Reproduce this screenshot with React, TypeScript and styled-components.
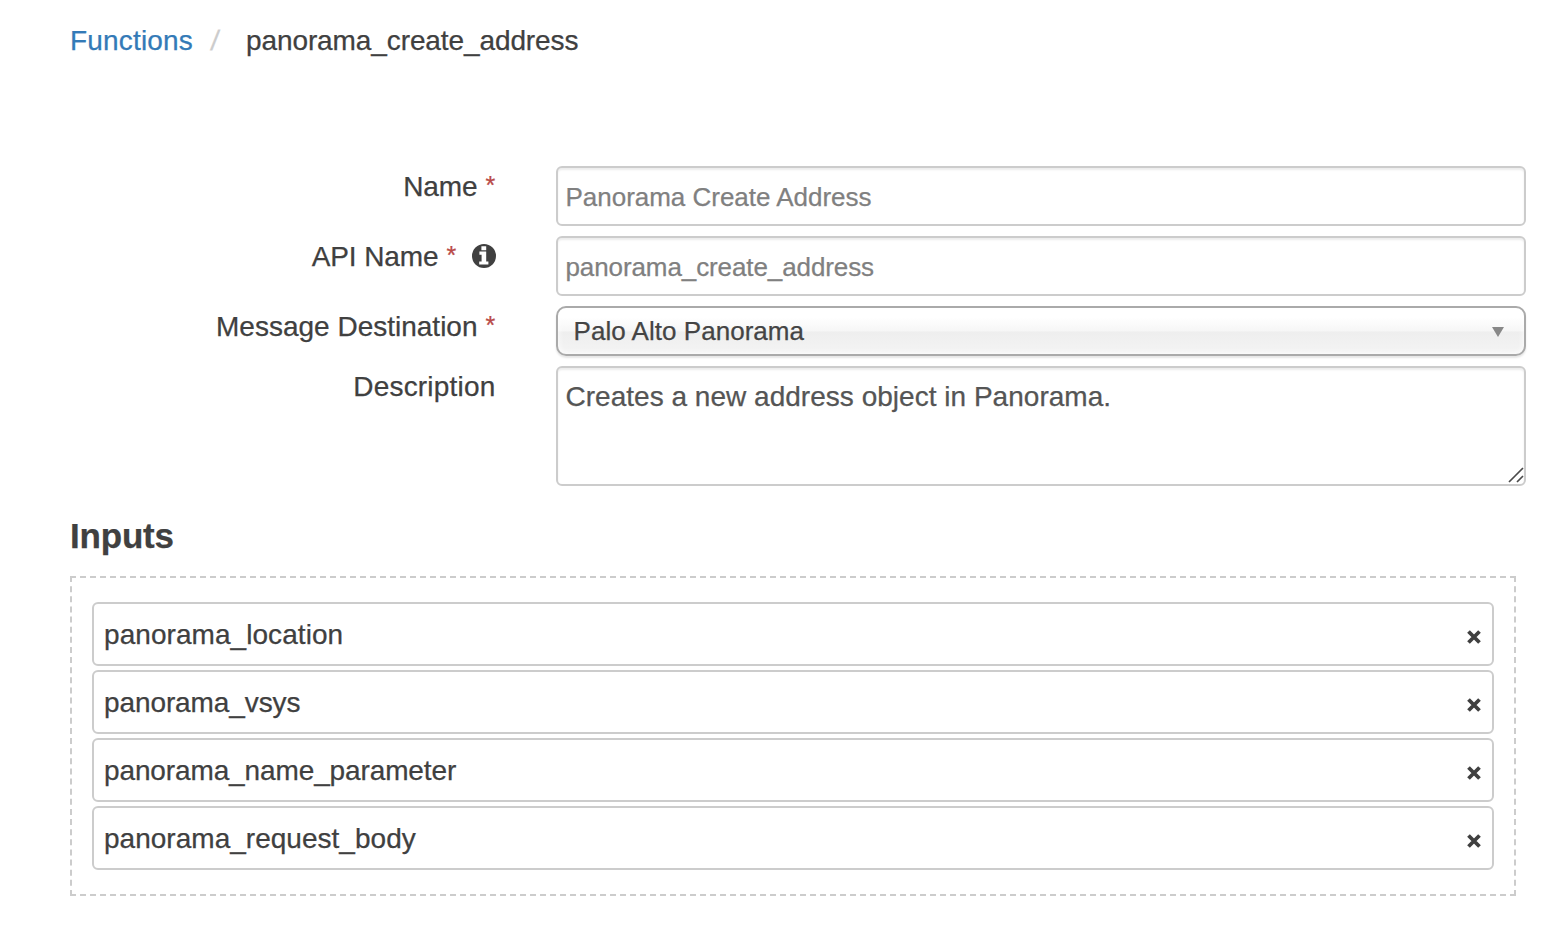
import React from 'react';
import styled, { createGlobalStyle } from 'styled-components';

const GlobalStyle = createGlobalStyle`
  *, *::before, *::after { box-sizing: border-box; }
  body {
    margin: 0;
    background: #fff;
    color: #404040;
    font: 28px/40px "Liberation Sans", Arial, sans-serif;
    -webkit-text-stroke: 0.25px currentColor;
  }
`;

const Page = styled.main`
  width: 1566px;
  height: 934px;
  padding: 21px 40px 0 70px;
  overflow: hidden;
`;

const Breadcrumb = styled.nav`
  display: flex;
  height: 40px;
  margin-bottom: 105px;
  white-space: pre;
`;

const Crumb = styled.a`
  width: 122px;
  color: #337ab7;
  text-decoration: none;
`;

const Slash = styled.span`
  width: 18px;
  margin: 0 18px;
  padding-left: 1px;
  color: #ccc;
  transform: skewX(-7deg);
`;

const Text = styled.span<{ $track?: number }>`
  letter-spacing: ${p => p.$track ?? 0}px;
  white-space: nowrap;
`;

const Form = styled.form`
  display: flex;
  flex-direction: column;
  gap: 10px;
`;

const Row = styled.div`
  display: grid;
  grid-template-columns: 425.5px 970px;
  column-gap: 60.5px;
  align-items: start;
`;

const Label = styled.label`
  display: flex;
  justify-content: flex-end;
  height: 41px;
  margin-bottom: -1px;
  padding-top: 1px;
`;

const Star = styled.span`
  width: 10px;
  margin-left: 8px;
  color: #b94a48;
  font-size: 25px;
  line-height: 36px;
`;

const InfoIcon = styled.svg`
  width: 24px;
  height: 24px;
  margin: 7px 0 0 15px;
  fill: #404040;
`;

const Field = styled.div`
  height: 60px;
  padding: 9px 7.5px;
  border: 2px solid #ccc;
  border-radius: 6px;
  box-shadow: inset 0 2px 2px rgba(0, 0, 0, 0.075);
  color: #808080;
  font-size: 26px;
`;

const Select = styled.div`
  display: flex;
  justify-content: space-between;
  height: 50px;
  padding: 3px 20px 0 15.5px;
  border: 2px solid #aaa;
  border-radius: 10px;
  background: linear-gradient(#fff 20%, #f6f6f6 50%, #eee 52%, #f4f4f4 100%);
  background-clip: padding-box;
  box-shadow: inset 0 0 6px #fff, 0 2px 2px rgba(0, 0, 0, 0.1);
  color: #444;
  font-size: 26px;
`;

const Arrow = styled.svg`
  width: 12px;
  height: 10px;
  margin-top: 16px;
  fill: #888;
`;

const TextArea = styled(Field)`
  display: flex;
  justify-content: space-between;
  height: 120px;
  padding: 9px 0 0 7.5px;
  color: #555;
  font-size: 28px;
`;

const Grip = styled.svg`
  align-self: flex-end;
  width: 16px;
  height: 16px;
  margin-bottom: 1px;
  stroke: #4a4a4a;
  stroke-width: 1.7;
`;

const Heading = styled.h2`
  margin: 30px 0 20px;
  font-size: 35px;
  line-height: 40px;
`;

const DropZone = styled.ul`
  display: flex;
  flex-direction: column;
  gap: 4px;
  width: 1446px;
  margin: 0;
  padding: 24px 20px;
  border: 2px dashed #ccc;
  list-style: none;
`;

const Item = styled.li`
  display: flex;
  justify-content: space-between;
  height: 64px;
  padding: 11px 11px 0 10px;
  border: 2px solid #ccc;
  border-radius: 6px;
`;

const Remove = styled.svg`
  width: 14px;
  height: 14px;
  margin-top: 15px;
  stroke: #404040;
  stroke-width: 3.8;
`;

const inputs = [
  { name: 'panorama_location', track: 0.06 },
  { name: 'panorama_vsys', track: -0.1 },
  { name: 'panorama_name_parameter', track: -0.12 },
  { name: 'panorama_request_body', track: 0.02 },
];

export default function App() {
  return (
    <Page>
      <GlobalStyle />
      <Breadcrumb>
        <Crumb><Text $track={0.17}>Functions</Text></Crumb>
        <Slash>/</Slash>
        <Text $track={-0.1}>panorama_create_address</Text>
      </Breadcrumb>
      <Form>
        <Row>
          <Label><Text $track={-0.1}>Name</Text><Star>*</Star></Label>
          <Field><Text $track={-0.02}>Panorama Create Address</Text></Field>
        </Row>
        <Row>
          <Label>
            <Text $track={-0.1}>API Name</Text><Star>*</Star>
            <InfoIcon viewBox="0 0 24 24">
              <circle cx="12" cy="12" r="12" />
              <path fill="#fff" d="M9.4 2.2h4.8v4H9.4zM7.4 7.6h6.8v9.8h2.2v3.2H7.2v-3.2h2.4v-6.6H7.4z" />
            </InfoIcon>
          </Label>
          <Field><Text $track={-0.1}>panorama_create_address</Text></Field>
        </Row>
        <Row>
          <Label><Text>Message Destination</Text><Star>*</Star></Label>
          <Select>
            <Text $track={0.04}>Palo Alto Panorama</Text>
            <Arrow viewBox="0 0 12 10"><path d="M0 0h12L6 10z" /></Arrow>
          </Select>
        </Row>
        <Row>
          <Label><Text $track={0.2}>Description</Text></Label>
          <TextArea>
            <Text $track={0.02}>Creates a new address object in Panorama.</Text>
            <Grip viewBox="0 0 16 16"><path d="M1 15L15 1M9 15l6-6" /></Grip>
          </TextArea>
        </Row>
      </Form>
      <Heading><Text $track={-0.2}>Inputs</Text></Heading>
      <DropZone>
        {inputs.map(input => (
          <Item key={input.name}>
            <Text $track={input.track}>{input.name}</Text>
            <Remove viewBox="0 0 14 14">
              <path d="M1.5 1.5l11 11M12.5 1.5l-11 11" />
            </Remove>
          </Item>
        ))}
      </DropZone>
    </Page>
  );
}
